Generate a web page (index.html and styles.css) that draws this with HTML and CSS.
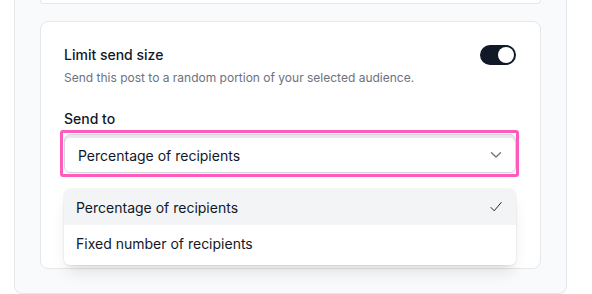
FILE: index.html
```html
<!DOCTYPE html>
<html>
<head>
<meta charset="utf-8">
<link rel="stylesheet" href="styles.css">
</head>
<body>
<div class="panel">
  <div class="card-prev"></div>
  <div class="card">
    <div class="setting">
      <div class="setting-text">
        <div class="setting-title">Limit send size</div>
        <div class="setting-desc">Send this post to a random portion of your selected audience.</div>
      </div>
      <div class="toggle"><span class="knob"></span></div>
    </div>
    <div class="field">
      <div class="label">Send to</div>
      <div class="select-wrap">
        <div class="select">
          <span>Percentage of recipients</span>
          <svg class="chevron" width="12" height="8" viewBox="0 0 12 8"><path d="M1.5 1.8 L6 6 L10.5 1.8" fill="none" stroke="#6b7280" stroke-width="1.3" stroke-linecap="round" stroke-linejoin="round"/></svg>
        </div>
        <div class="highlight"></div>
        <div class="menu">
          <div class="option active">
            <span>Percentage of recipients</span>
            <svg class="check" width="14" height="12" viewBox="0 0 14 12"><path d="M2 6.5 L5.2 9.8 L12.2 1.5" fill="none" stroke="#1f2937" stroke-width="1" stroke-linecap="round" stroke-linejoin="round"/></svg>
          </div>
          <div class="option"><span>Fixed number of recipients</span></div>
        </div>
      </div>
      <div class="under"></div>
    </div>
  </div>
</div>
</body>
</html>
```
FILE: styles.css
```css
* { box-sizing: border-box; }
html, body { margin: 0; padding: 0; background: #ffffff; }
body {
  font-family: Inter, "Noto Sans", sans-serif;
  color: #111827;
  width: 592px;
  height: 294px;
  overflow: hidden;
}
.panel {
  margin-left: 14px;
  width: 553px;
  background: #f9fafb;
  border: 1px solid #e5e7eb;
  border-top: none;
  border-radius: 0 0 8px 8px;
  padding: 0 25px 24px 25px;
}
.card-prev {
  height: 4px;
  background: #ffffff;
  border: 1px solid #e5e7eb;
  border-top: none;
  border-radius: 0 0 8px 8px;
}
.card {
  margin-top: 17px;
  background: #ffffff;
  border: 1px solid #e5e7eb;
  border-radius: 8px;
  padding: 23px 24px 24px 23px;
}
.setting {
  display: flex;
  justify-content: space-between;
  align-items: flex-start;
}
.setting-title {
  font-size: 14px;
  line-height: 20px;
  font-weight: 500;
  color: #111827;
}
.setting-desc {
  margin-top: 5px;
  font-size: 12px;
  line-height: 16px;
  color: #6b7280;
}
.toggle {
  margin-top: 0;
  width: 36px;
  height: 20px;
  border-radius: 10px;
  background: #111827;
  display: flex;
  justify-content: flex-end;
  align-items: center;
  padding: 0 2px;
}
.knob {
  width: 16px;
  height: 16px;
  border-radius: 50%;
  background: #ffffff;
}
.field { margin-top: 23px; }
.label {
  font-size: 14px;
  line-height: 20px;
  font-weight: 500;
  color: #111827;
}
.select-wrap {
  position: relative;
  margin-top: 5px;
}
.select {
  height: 39px;
  border: 1px solid #d1d5db;
  border-radius: 6px;
  box-shadow: inset 0 3px 0 #e5e7eb, 0 1px 2px rgba(0,0,0,0.05);
  display: flex;
  align-items: center;
  justify-content: space-between;
  padding: 3px 13px 0 13px;
  font-size: 14px;
  color: #111827;
}
.chevron { display: block; }
.highlight {
  position: absolute;
  left: -4px;
  right: -3px;
  top: -4px;
  bottom: -4px;
  border: 3px solid #ff5bbf;
  border-radius: 3px;
  pointer-events: none;
}
.menu {
  position: absolute;
  left: 0;
  right: 0;
  top: 55px;
  background: #ffffff;
  border-radius: 6px;
  box-shadow: 0 10px 15px -3px rgba(0,0,0,0.1), 0 4px 6px -4px rgba(0,0,0,0.1), 0 0 0 1px rgba(0,0,0,0.03);
  padding-bottom: 4px;
  overflow: hidden;
}
.option {
  height: 36px;
  display: flex;
  align-items: center;
  justify-content: space-between;
  padding: 0 13px 0 12px;
  font-size: 14px;
  color: #111827;
}
.option.active { background: #f3f4f6; }
.check { display: block; }
.under { height: 71px; }
```
